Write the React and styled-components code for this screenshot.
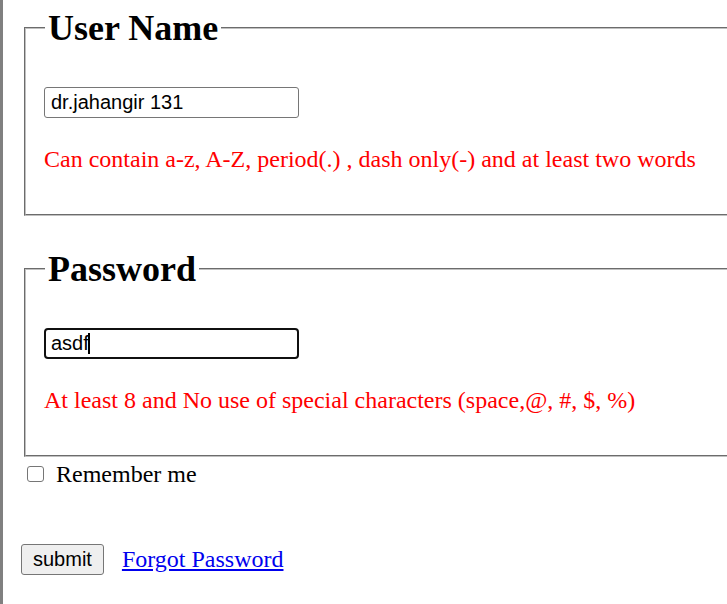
import React from 'react'
import styled, { createGlobalStyle } from 'styled-components'

const GlobalStyle = createGlobalStyle`
  html, body {
    margin: 0;
    padding: 0;
    background: #ffffff;
    overflow: hidden;
  }
  body {
    font-family: 'Liberation Serif', 'Times New Roman', serif;
    font-size: 24px;
    color: #000000;
  }
`

const Page = styled.div`
  min-height: 100vh;
  box-sizing: border-box;
  border-left: 3px solid #808080;
  padding: 8px 0 0 18px;
`

const Form = styled.form`
  display: flex;
  flex-direction: column;
  align-items: flex-start;
`

const Group = styled.fieldset`
  width: 760px;
  box-sizing: border-box;
  margin: ${(p) => (p.$first ? '0' : '33px')} 0 0 3px;
  padding: 0 18px 41px 18px;
  border: 2px groove #c0c0c0;
  min-inline-size: auto;
`

const Title = styled.legend`
  font-family: 'Liberation Serif', 'Times New Roman', serif;
  font-weight: bold;
  font-size: 36px;
  line-height: 40px;
  padding: 0 3px;
  margin-left: 1px;
`

const InputWrap = styled.div`
  position: relative;
  margin-top: 39px;
  width: 255px;
`

const TextInput = styled.input`
  display: block;
  width: 255px;
  height: 31px;
  box-sizing: border-box;
  margin: 0;
  font-family: 'Liberation Sans', Arial, sans-serif;
  font-size: 20px;
  color: #000000;
  background: #ffffff;
  border: ${(p) => (p.$active ? '2px solid #101010' : '1px solid #767676')};
  border-radius: ${(p) => (p.$active ? '4px' : '3px')};
  padding: 0 0 0 ${(p) => (p.$active ? '5px' : '6px')};
  outline: none;
`

const Caret = styled.span`
  position: absolute;
  top: 5px;
  left: ${(p) => p.$left}px;
  width: 2px;
  height: 21px;
  background: #000000;
`

const Hint = styled.p`
  margin: 27px 0 0;
  line-height: 28px;
  color: #ff0000;
  white-space: nowrap;
`

const RememberRow = styled.label`
  display: flex;
  align-items: center;
  margin-top: 3px;
  line-height: 28px;
`

const Check = styled.span`
  width: 17px;
  height: 16px;
  box-sizing: border-box;
  margin: 0 12px 0 6px;
  border: 1px solid #767676;
  border-radius: 3px;
  background: #ffffff;
`

const Actions = styled.div`
  display: flex;
  align-items: center;
  margin-top: 56px;
`

const SubmitButton = styled.button`
  height: 31px;
  padding: 0 11px;
  font-family: 'Liberation Sans', Arial, sans-serif;
  font-size: 20px;
  color: #000000;
  background: #efefef;
  border: 1px solid #767676;
  border-radius: 3px;
`

const ForgotLink = styled.a`
  margin-left: 18px;
  color: #0000ee;
  text-decoration: underline;
`

export default function App() {
  return (
    <>
      <GlobalStyle />
      <Page>
        <Form onSubmit={(e) => e.preventDefault()}>
          <Group $first>
            <Title>User Name</Title>
            <InputWrap>
              <TextInput type="text" defaultValue="dr.jahangir 131" />
            </InputWrap>
            <Hint>Can contain a-z, A-Z, period(.) , dash only(-) and at least two words</Hint>
          </Group>
          <Group>
            <Title>Password</Title>
            <InputWrap>
              <TextInput type="text" defaultValue="asdf" $active />
              <Caret $left={44} />
            </InputWrap>
            <Hint>At least 8 and No use of special characters (space,@, #, $, %)</Hint>
          </Group>
          <RememberRow>
            <Check />
            Remember me
          </RememberRow>
          <Actions>
            <SubmitButton type="submit">submit</SubmitButton>
            <ForgotLink href="#">Forgot Password</ForgotLink>
          </Actions>
        </Form>
      </Page>
    </>
  )
}
